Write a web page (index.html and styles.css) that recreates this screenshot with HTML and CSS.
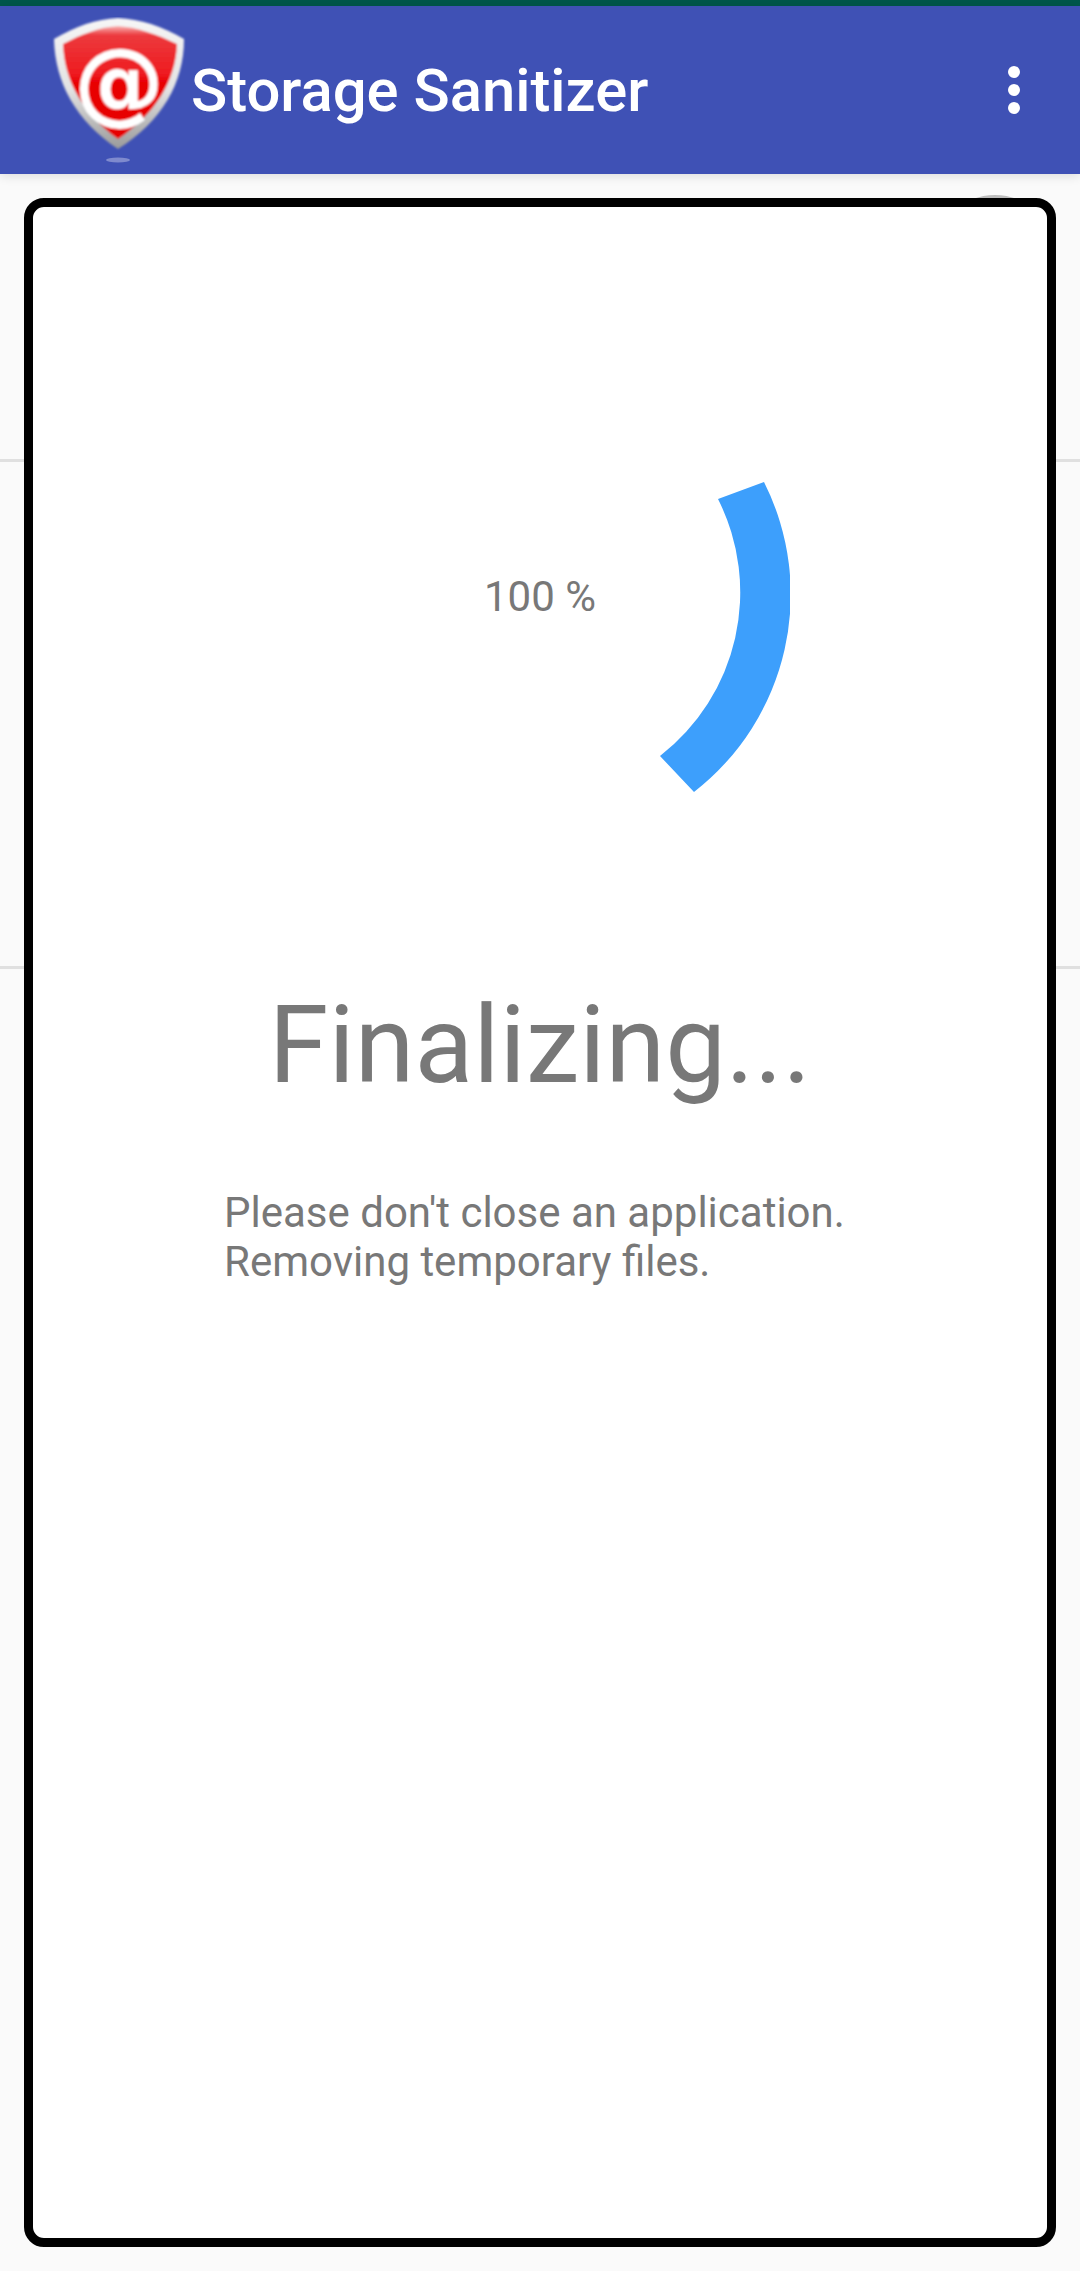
FILE: index.html
```html
<!DOCTYPE html>
<html>
<head>
<meta charset="utf-8" />
<title>Storage Sanitizer</title>
<link rel="stylesheet" href="styles.css">
</head>
<body>
<div class="status"></div>
<div class="toolbar">
	<svg class="logo" width="134" height="146" viewBox="0 0 134 146">
		<defs>
			<linearGradient id="rim" x1="0" y1="0" x2="0" y2="1">
				<stop offset="0" stop-color="#f6f6f6"/>
				<stop offset="0.55" stop-color="#e2e2e2"/>
				<stop offset="1" stop-color="#9a9a9a"/>
			</linearGradient>
			<linearGradient id="red" x1="0" y1="0" x2="0" y2="1">
				<stop offset="0" stop-color="#f9b4b4"/>
				<stop offset="0.08" stop-color="#ec3a3e"/>
				<stop offset="0.42" stop-color="#ee1c20"/>
				<stop offset="0.5" stop-color="#e80004"/>
				<stop offset="1" stop-color="#e60000"/>
			</linearGradient>
			<filter id="soft"><feGaussianBlur stdDeviation="0.9"/></filter>
		</defs>
		<g filter="url(#soft)">
			<path d="M2 22 C24 9 44 2 66 1 C88 2 110 9 132 22 C132 66 110 104 66 132 C24 104 3 66 2 22 Z" fill="url(#rim)"/>
			<path d="M11 27 C30 17 48 10 66 9 C84 10 104 17 125 27 C124 64 102 98 66 122 C32 98 12 64 11 27 Z" fill="url(#red)"/>
			<text class="logo_at" x="67" y="96" text-anchor="middle">@</text>
		</g>
		<ellipse cx="66" cy="143" rx="12" ry="2.5" fill="#7f8ace"/>
	</svg>
	<div class="title">Storage Sanitizer</div>
	<div class="menu"><span></span><span></span><span></span></div>
</div>

<div class="list">
	<div class="row row_first"><span class="avatar"></span></div>
	<div class="row row_second"></div>
</div>

<div class="card">
	<div class="ring">
		<svg width="500" height="500" viewBox="0 0 500 500">
			<path d="M474 137 A250 250 0 0 1 404 447 L370 411 A207 207 0 0 0 428 154 Z" fill="#3d9ffc"/>
		</svg>
		<div class="percent">100 %</div>
	</div>
	<div class="heading">Finalizing...</div>
	<div class="message">Please don't close an application.<br />Removing temporary files.</div>
</div>
</body>
</html>
```

FILE: styles.css
```css
body { margin: 0; background: #fafafa; font-family: Roboto, "Liberation Sans", sans-serif; height: 2271px; overflow: hidden; position: relative; }

.status { height: 6px; background: #00574b; }

.toolbar { height: 168px; background: #3f51b5; display: flex; align-items: center; box-shadow: 0 2px 10px rgba(0,0,0,0.12); position: relative; }
.logo { margin: 0 0 0 52px; flex: none; }
.logo_at { font: bold 90px "DejaVu Sans", sans-serif; fill: #fff; }
.title { margin: 2px 0 0 5px; color: #fff; font-size: 59.8px; font-weight: 500; }
.menu { margin-left: auto; margin-right: 60px; width: 12px; display: flex; flex-direction: column; gap: 6px; }
.menu span { width: 12px; height: 12px; border-radius: 50%; background: #fff; }

.row { border-bottom: 3px solid #e0e0e0; position: relative; }
.row_first { height: 285px; }
.row_second { height: 504px; }
.avatar { position: absolute; top: 21px; right: 26px; width: 118px; height: 118px; border-radius: 50%; background: #bdbdbd; }

.card { position: absolute; left: 24px; top: 198px; width: 1032px; height: 2049px; box-sizing: border-box; border: 9px solid #000; border-radius: 20px; background: #fff; }

.ring { width: 500px; height: 500px; margin: 138px auto 0; position: relative; }
.ring svg { display: block; }
.percent { position: absolute; left: 0; right: 0; top: 0; line-height: 500px; margin-top: 2px; text-align: center; color: #787878; font-size: 42px; }

.heading { margin-top: 140px; text-align: center; color: #787878; font-size: 108px; line-height: 120px; }

.message { margin: 83px 0 0 191px; color: #787878; font-size: 42px; line-height: 49px; }
```
